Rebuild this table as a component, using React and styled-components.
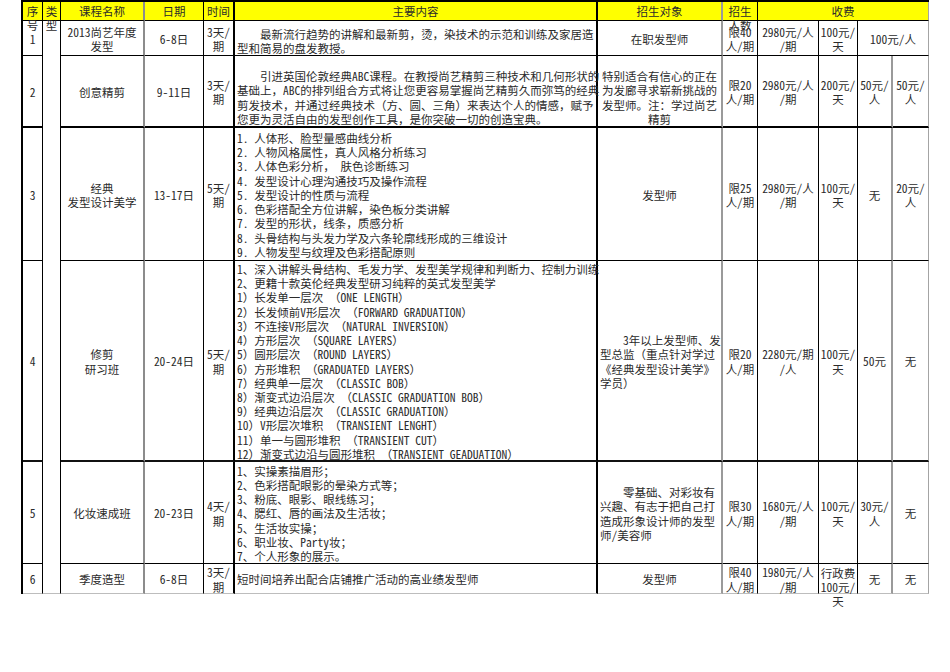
import React from 'react'
import styled, { createGlobalStyle } from 'styled-components'

const Global = createGlobalStyle`
  html, body {
    margin: 0;
    padding: 0;
    background: #fff;
  }
  body {
    font-family: "Noto Sans Mono CJK SC", "Noto Sans CJK SC", "Liberation Serif", sans-serif;
    font-size: 11.5px;
    color: #2b2b2b;
  }
`

const Page = styled.div`
  min-height: 672px;
  width: 950px;
`

const Sheet = styled.div`
  display: grid;
  grid-template-columns: ${p => p.$cols.map(c => c + 'px').join(' ')};
  grid-template-rows: ${p => p.$rows.map(r => r + 'px').join(' ')};
  width: max-content;
  margin-left: 21px;
  border-left: 2px solid #000;
  border-top: 2px solid #000;
`

const justify = { top: 'flex-start', center: 'center', bottom: 'flex-end' }

const Cell = styled.div`
  box-sizing: border-box;
  grid-column: span ${p => p.$span};
  grid-row: span ${p => p.$rowSpan};
  border-right: ${p => p.$right};
  border-bottom: ${p => p.$bottom};
  background: ${p => (p.$head ? '#ffff00' : 'transparent')};
  display: flex;
  flex-direction: column;
  justify-content: ${p => justify[p.$v]};
  align-items: ${p => (p.$align === 'left' ? 'flex-start' : 'center')};
  text-align: ${p => p.$align};
  padding: ${p => (p.$align === 'left' ? '2px 1px 0 2px' : '2px 0 0')};
  min-width: 0;
  min-height: 0;
`

const Line = styled.div`
  flex-shrink: 0;
  white-space: pre;
  line-height: 14.2px;
`

const colWidths = [20, 18, 84, 59, 31, 363, 125, 35, 61, 39, 35, 36]
const rowHeights = [19, 35, 72, 133, 201, 102, 30]

const colRight = [
  '1px solid #000',
  '1px solid #000',
  '2px solid #8c8c8c',
  '1px solid #000',
  '2px solid #000',
  '2px solid #000',
  '2px solid #9a9a9a',
  '1px solid #000',
  '1px solid #000',
  '1px solid #000',
  '2px solid #9a9a9a',
  '1px solid #a4a4a4',
]

const rowBottom = [
  '1px solid #000',
  '1px solid #000',
  '2px solid #000',
  '1px solid #000',
  '2px solid #111',
  '1px solid #000',
  '1px solid #bdbdbd',
]

// each cell: [col, lines, opts]
const header = [
  [0, ['序', '号'], { v: 'top' }],
  [1, ['类', '型'], { v: 'top' }],
  [2, ['课程名称'], { v: 'top' }],
  [3, ['日期'], { v: 'top' }],
  [4, ['时间'], { v: 'top' }],
  [5, ['主要内容'], { v: 'top' }],
  [6, ['招生对象'], { v: 'top' }],
  [7, ['招生', '人数'], { v: 'top' }],
  [8, ['收费'], { v: 'top', span: 4 }],
]

const rows = [
  [
    [0, ['1']],
    [1, [], { rowSpan: 6 }],
    [2, ['2013尚艺年度', '发型']],
    [3, ['6-8日']],
    [4, ['3天/', '期']],
    [5, ['　　最新流行趋势的讲解和最新剪，烫，染技术的示范和训练及家居造', '型和简易的盘发教授。'], { align: 'left', v: 'bottom' }],
    [6, ['在职发型师']],
    [7, ['限40', '人/期']],
    [8, ['2980元/人', '/期']],
    [9, ['100元/', '天']],
    [10, ['100元/人'], { span: 2 }],
  ],
  [
    [0, ['2']],
    [2, ['创意精剪']],
    [3, ['9-11日']],
    [4, ['3天/', '期']],
    [5, [
      '　　引进英国伦敦经典ABC课程。在教授尚艺精剪三种技术和几何形状的',
      '基础上，ABC的排列组合方式将让您更容易掌握尚艺精剪久而弥笃的经典',
      '剪发技术，并通过经典技术（方、圆、三角）来表达个人的情感，赋予',
      '您更为灵活自由的发型创作工具，是你突破一切的创造宝典。',
    ], { align: 'left', v: 'bottom' }],
    [6, ['特别适合有信心的正在', '为发廊寻求崭新挑战的', '发型师。注：学过尚艺', '精剪'], { v: 'bottom' }],
    [7, ['限20', '人/期']],
    [8, ['2980元/人', '/期']],
    [9, ['200元/', '天']],
    [10, ['50元/', '人']],
    [11, ['50元/', '人']],
  ],
  [
    [0, ['3']],
    [2, ['经典', '发型设计美学']],
    [3, ['13-17日']],
    [4, ['5天/', '期']],
    [5, [
      '1. 人体形、脸型量感曲线分析',
      '2. 人物风格属性，真人风格分析练习',
      '3. 人体色彩分析， 肤色诊断练习',
      '4. 发型设计心理沟通技巧及操作流程',
      '5. 发型设计的性质与流程',
      '6. 色彩搭配全方位讲解，染色板分类讲解',
      '7. 发型的形状，线条，质感分析',
      '8. 头骨结构与头发力学及六条轮廓线形成的三维设计',
      '9. 人物发型与纹理及色彩搭配原则',
    ], { align: 'left' }],
    [6, ['发型师']],
    [7, ['限25', '人/期']],
    [8, ['2980元/人', '/期']],
    [9, ['100元/', '天']],
    [10, ['无']],
    [11, ['20元/', '人']],
  ],
  [
    [0, ['4']],
    [2, ['修剪', '研习班']],
    [3, ['20-24日']],
    [4, ['5天/', '期']],
    [5, [
      '1、深入讲解头骨结构、毛发力学、发型美学规律和判断力、控制力训练',
      '2、更籍十款英伦经典发型研习纯粹的英式发型美学',
      '1）长发单一层次 （ONE LENGTH）',
      '2）长发倾前V形层次 （FORWARD GRADUATION）',
      '3）不连接V形层次 （NATURAL INVERSION）',
      '4）方形层次 （SQUARE LAYERS）',
      '5）圆形层次 （ROUND LAYERS）',
      '6）方形堆积 （GRADUATED LAYERS）',
      '7）经典单一层次 （CLASSIC BOB）',
      '8）渐变式边沿层次 （CLASSIC GRADUATION BOB）',
      '9）经典边沿层次 （CLASSIC GRADUATION）',
      '10）V形层次堆积 （TRANSIENT LENGHT）',
      '11）单一与圆形堆积 （TRANSIENT CUT）',
      '12）渐变式边沿与圆形堆积 （TRANSIENT GEADUATION）',
    ], { align: 'left' }],
    [6, ['　　3年以上发型师、发', '型总监（重点针对学过', '《经典发型设计美学》', '学员）'], { align: 'left' }],
    [7, ['限20', '人/期']],
    [8, ['2280元/期', '/人']],
    [9, ['100元/', '天']],
    [10, ['50元']],
    [11, ['无']],
  ],
  [
    [0, ['5']],
    [2, ['化妆速成班']],
    [3, ['20-23日']],
    [4, ['4天/', '期']],
    [5, [
      '1、实操素描眉形；',
      '2、色彩搭配眼影的晕染方式等；',
      '3、粉底、眼影、眼线练习；',
      '4、腮红、唇的画法及生活妆；',
      '5、生活妆实操；',
      '6、职业妆、Party妆；',
      '7、个人形象的展示。',
    ], { align: 'left' }],
    [6, ['　　零基础、对彩妆有', '兴趣、有志于把自己打', '造成形象设计师的发型', '师/美容师'], { align: 'left' }],
    [7, ['限30', '人/期']],
    [8, ['1680元/人', '/期']],
    [9, ['100元/', '天']],
    [10, ['30元/', '人']],
    [11, ['无']],
  ],
  [
    [0, ['6']],
    [2, ['季度造型']],
    [3, ['6-8日']],
    [4, ['3天/', '期']],
    [5, ['短时间培养出配合店铺推广活动的高业绩发型师'], { align: 'left' }],
    [6, ['发型师']],
    [7, ['限40', '人/期']],
    [8, ['1980元/人', '/期']],
    [9, ['行政费', '100元/', '天'], { v: 'top' }],
    [10, ['无']],
    [11, ['无']],
  ],
]

const renderCell = (cell, rowIndex, head) => {
  const [col, lines, opts = {}] = cell
  const span = opts.span || 1
  const rowSpan = opts.rowSpan || 1
  return (
    <Cell
      key={rowIndex + '-' + col}
      $span={span}
      $rowSpan={rowSpan}
      $right={colRight[col + span - 1]}
      $bottom={rowBottom[rowIndex + rowSpan - 1]}
      $head={head}
      $align={opts.align || 'center'}
      $v={opts.v || 'center'}
    >
      {lines.map((l, i) => (
        <Line key={i}>{l}</Line>
      ))}
    </Cell>
  )
}

const App = () => {
  return (
    <Page>
      <Global />
      <Sheet $cols={colWidths} $rows={rowHeights}>
        {header.map(c => renderCell(c, 0, true))}
        {rows.map((r, ri) => r.map(c => renderCell(c, ri + 1, false)))}
      </Sheet>
    </Page>
  )
}

export default App
